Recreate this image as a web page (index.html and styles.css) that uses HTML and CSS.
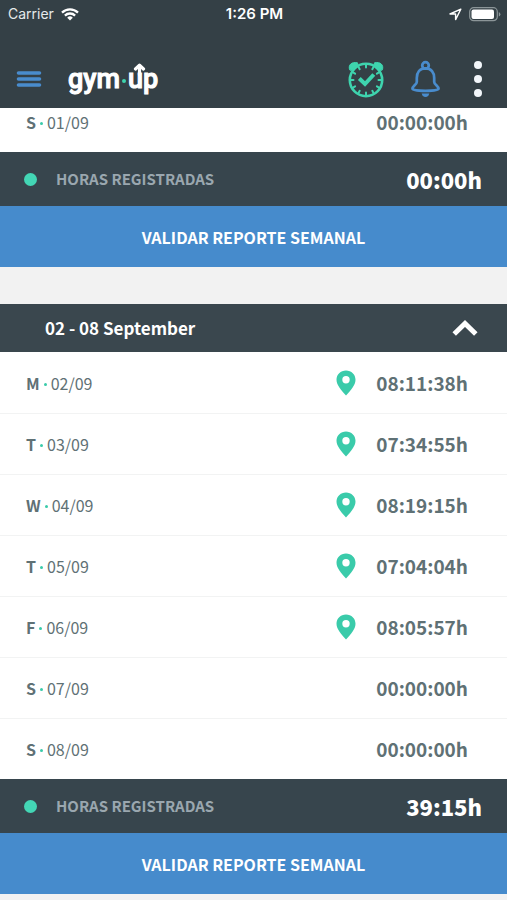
FILE: index.html
```html
<!DOCTYPE html>
<html lang="es">
<head>
<meta charset="utf-8">
<meta name="viewport" content="width=device-width, initial-scale=1">
<title>gym·up</title>
<link rel="stylesheet" href="styles.css">
</head>
<body>
<svg class="defs" aria-hidden="true">
  <symbol id="pin" viewBox="0 0 20 26"><path fill-rule="evenodd" d="M10 .5C4.600.5.500 4.500.500 9.800c0 5.200 4.500 10.200 9.500 15.700 5-5.500 9.500-10.500 9.500-15.700C19.500 4.500 15.400.5 10 .5zm0 5.500a3.700 3.700 0 1 1 0 7.400A3.700 3.700 0 0 1 10 6z"/></symbol>
</svg>
<header class="top">
  <div class="status">
    <div class="status-left">
      <span>Carrier</span>
      <svg width="18" height="13" viewBox="0 0 18 13" fill="none" stroke="#fff" stroke-width="2.300"><path d="M1 4.700a11.500 11.500 0 0 1 16 0M3.900 7.600a7.300 7.300 0 0 1 10.200 0"/><path d="M9 12.500 6.200 9.700a4 4 0 0 1 5.600 0z" fill="#fff" stroke="none"/></svg>
    </div>
    <span class="clock">1:26 PM</span>
    <div class="status-right">
      <svg width="13" height="13" viewBox="0 0 13 13" fill="none" stroke="#fff" stroke-width="1.400" stroke-linejoin="round"><path d="M11.800 1.200 1 6h5.600v5.600z"/></svg>
      <svg width="32" height="15" viewBox="0 0 32 15"><rect x=".7" y=".7" width="27.600" height="13" rx="4" fill="none" stroke="#8b9598" stroke-width="1.200"/><rect x="2.500" y="2.500" width="22.500" height="9.500" rx="2" fill="#fff"/><path d="M29.800 5q1.600.7 1.600 2.300t-1.600 2.300z" fill="#8b9598"/></svg>
    </div>
  </div>
  <nav class="bar">
    <button class="icon-btn" aria-label="Menú">
      <svg width="26" height="18" viewBox="0 0 26 18" stroke="#498ccd" stroke-width="3.600" stroke-linecap="round"><path d="M2.500 3h21M2.500 9h21M2.500 15h21"/></svg>
    </button>
    <a class="logo" href="#">gym<span class="logo-dot"></span><span class="logo-u">u<svg class="logo-arrow" width="13" height="14" viewBox="0 0 13 14" fill="none" stroke="#fff" stroke-width="3.200" stroke-linecap="round" stroke-linejoin="round"><path d="M6.500 12V2.500M2.500 6l4-3.800 4 3.800"/></svg></span>p</a>
    <div class="actions">
      <button class="icon-btn" aria-label="Fichar">
        <svg width="36" height="38" viewBox="0 0 36 38" fill="none" stroke="#3ed4ae" stroke-width="2.600" stroke-linecap="round"><circle cx="18" cy="20" r="16.200"/><path d="M1.500 9.500C0 5 3.500 1.500 9.500 2.800L10 5 3.800 10.500zM34.500 9.500C36 5 32.500 1.500 26.500 2.800L26 5l6.200 5.500z" fill="#3ed4ae" stroke-width="1"/><path stroke-width="2" d="M18 4.500v3M18 32.500v3M2.500 20h3M30.500 20h3M10.200 6.600l1.500 2.600M24.300 30.800l1.500 2.600M25.800 6.600l-1.500 2.600M11.700 30.800l-1.500 2.600M4.600 12.200l2.500 1.500M31.400 12.200l-2.500 1.500M4.600 27.800l2.500-1.500M31.400 27.800l-2.500-1.500"/><path stroke-width="4" stroke-linecap="butt" d="M11.300 18.500l5.700 5.500 8.800-9.500"/></svg>
      </button>
      <button class="icon-btn" aria-label="Avisos">
        <svg width="29" height="38" viewBox="0 0 30 38" fill="none" stroke="#498ccd" stroke-width="2.800" stroke-linejoin="round"><circle cx="15" cy="5" r="3.400"/><path d="M15 8c-6 0-9 4.300-9 10v4c0 2.500-4.500 4.500-4.500 7 0 1.600 6 2.200 13.500 2.200s13.500-.6 13.500-2.200c0-2.500-4.500-4.500-4.500-7v-4c0-5.700-3-10-9-10z"/><path d="M11 34h8l-1 2.200q-3 2.600-6 0z" fill="#498ccd" stroke="none"/></svg>
      </button>
      <button class="icon-btn more" aria-label="Más opciones">
        <svg width="10" height="38" viewBox="0 0 10 38" fill="#f2f6fa"><circle cx="5" cy="5" r="4"/><circle cx="5" cy="19" r="4"/><circle cx="5" cy="33" r="4"/></svg>
      </button>
    </div>
  </nav>
</header>
<main>
  <section class="week week-scrolled">
    <table class="days">
      <tr><th scope="row"><b>S</b><i></i>01/09</th><td class="place"></td><td class="time">00:00:00h</td></tr>
    </table>
    <div class="total"><span class="bullet"></span><span class="total-label">HORAS REGISTRADAS</span><strong>00:00h</strong></div>
    <button class="validate">VALIDAR REPORTE SEMANAL</button>
  </section>
  <section class="week">
    <button class="week-head" aria-expanded="true"><span>02 - 08 September</span>
      <svg width="26" height="18" viewBox="0 0 26 18" fill="none" stroke="#fff" stroke-width="5"><path d="M2.200 15 13 4.500 23.800 15"/></svg>
    </button>
    <table class="days">
      <tr><th scope="row"><b>M</b><i></i>02/09</th><td class="place"><svg><use href="#pin"/></svg></td><td class="time">08:11:38h</td></tr>
      <tr><th scope="row"><b>T</b><i></i>03/09</th><td class="place"><svg><use href="#pin"/></svg></td><td class="time">07:34:55h</td></tr>
      <tr><th scope="row"><b>W</b><i></i>04/09</th><td class="place"><svg><use href="#pin"/></svg></td><td class="time">08:19:15h</td></tr>
      <tr><th scope="row"><b>T</b><i></i>05/09</th><td class="place"><svg><use href="#pin"/></svg></td><td class="time">07:04:04h</td></tr>
      <tr><th scope="row"><b>F</b><i></i>06/09</th><td class="place"><svg><use href="#pin"/></svg></td><td class="time">08:05:57h</td></tr>
      <tr><th scope="row"><b>S</b><i></i>07/09</th><td class="place"></td><td class="time">00:00:00h</td></tr>
      <tr><th scope="row"><b>S</b><i></i>08/09</th><td class="place"></td><td class="time">00:00:00h</td></tr>
    </table>
    <div class="total"><span class="bullet"></span><span class="total-label">HORAS REGISTRADAS</span><strong>39:15h</strong></div>
    <button class="validate">VALIDAR REPORTE SEMANAL</button>
  </section>
</main>
</body>
</html>
```
FILE: styles.css
```css
* { box-sizing: border-box; }

body {
  margin: 0;
  background: #f2f2f2;
  color: #5f7175;
  font-family: "Noto Sans CJK SC", "Open Sans", sans-serif;
  font-size: 16px;
  line-height: 24px;
}

button {
  border: 0;
  padding: 0;
  background: none;
  color: inherit;
  font: inherit;
  cursor: pointer;
}

svg { display: block; }

.defs { position: absolute; width: 0; height: 0; }

/* Header */
.top {
  position: sticky;
  top: 0;
  z-index: 1;
  height: 108px;
  background: #344046;
  color: #fff;
}

.status {
  display: grid;
  grid-template-columns: 1fr auto 1fr;
  align-items: center;
  height: 28px;
  padding: 0 6px 0 8px;
  font: 14px/20px Inter, sans-serif;
}

.status-left, .status-right { display: flex; align-items: center; gap: 7px; }
.status-left { color: #e6eaeb; }
.status-right { justify-content: flex-end; }
.clock { font-size: 15px; font-weight: 600; }

.bar {
  display: flex;
  align-items: center;
  height: 80px;
  padding: 22px 24px 0 16px;
}

.logo {
  display: flex;
  align-items: center;
  margin-left: 26px;
  color: #fff;
  font: 500 27px/32px Roboto, sans-serif;
  -webkit-text-stroke: 1px #fff;
  text-decoration: none;
}

.logo-dot {
  width: 4px;
  height: 4px;
  margin: 4px 2px 0;
  border-radius: 50%;
  background: #3ed4ae;
}

.logo-u { position: relative; }
.logo-arrow { position: absolute; top: 0; right: -3px; }

.actions { display: flex; align-items: center; gap: 27px; margin-left: auto; }
.more { padding-left: 6px; }

/* Weekly reports */
.week { margin-bottom: 37px; }
.week-scrolled { margin-top: -17px; }

.week-head {
  display: flex;
  align-items: center;
  justify-content: space-between;
  width: 100%;
  height: 48px;
  padding: 0 29px 0 45px;
  background: #3a474e;
  color: #fff;
  font-size: 17px;
  font-weight: 700;
}

.days {
  width: 100%;
  border-collapse: collapse;
  background: #fff;
}

.days th, .days td { height: 61px; padding: 0; }
.days tr + tr { box-shadow: inset 0 1px #f2f3f3; }
.days th { padding-left: 26px; font-weight: 400; text-align: left; }

.days i {
  display: inline-block;
  width: 3px;
  height: 3px;
  margin: 0 4px;
  border-radius: 50%;
  background: #3acbaa;
  vertical-align: 4px;
}

.days .place { width: 40px; }
.place svg { width: 20px; height: 26px; fill: #3acbaa; }

.days .time {
  width: 130px;
  padding-right: 39px;
  font-size: 19px;
  font-weight: 700;
  text-align: right;
}

.total {
  display: flex;
  align-items: center;
  height: 54px;
  padding: 0 25px 0 24px;
  background: #37454d;
  color: #9aa7af;
  font-size: 15px;
  font-weight: 700;
}

.bullet {
  width: 13px;
  height: 13px;
  margin-right: 19px;
  border-radius: 50%;
  background: #43d6b5;
}

.total strong { margin-left: auto; color: #fff; font-size: 22px; }

.validate {
  display: block;
  width: 100%;
  height: 61px;
  background: #468bcc;
  color: #fff;
  font-weight: 700;
}
```
